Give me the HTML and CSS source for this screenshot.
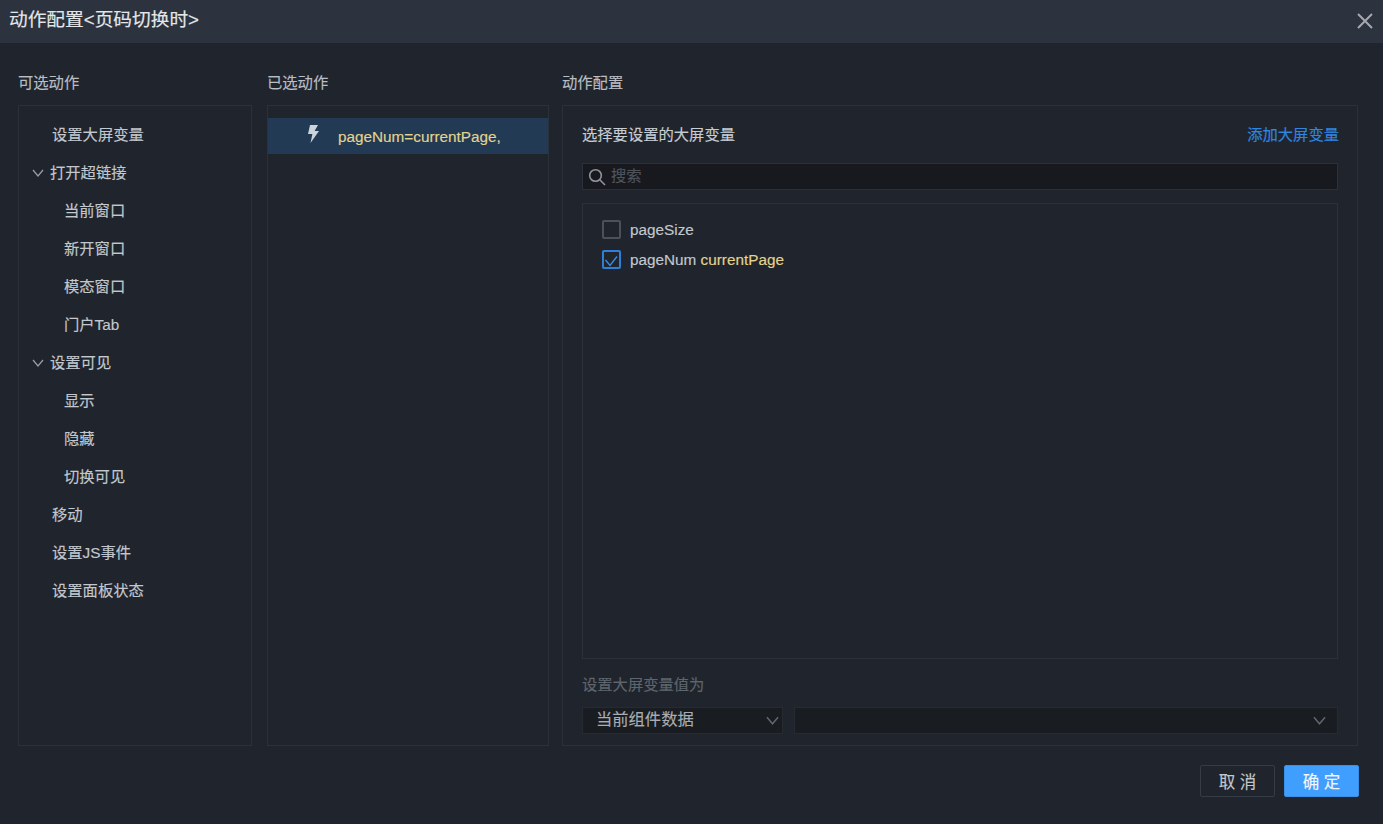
FILE: index.html
```html
<!DOCTYPE html>
<html lang="zh">
<head>
<meta charset="utf-8">
<title>动作配置</title>
<link rel="stylesheet" href="styles.css">
</head>
<body>
<div class="dialog">
  <header class="head">
    <span class="head-title">动作配置&lt;页码切换时&gt;</span>
    <svg class="close" viewBox="0 0 16 16"><path d="M1 1 15 15M15 1 1 15"/></svg>
  </header>
  <main class="cols">
    <section class="col col-a">
      <h2 class="col-title">可选动作</h2>
      <ul class="panel tree">
        <li class="node">设置大屏变量</li>
        <li class="node parent"><svg class="chev" viewBox="0 0 12 8"><path d="M1 1 6 7 11 1"/></svg>打开超链接</li>
        <li class="node sub">当前窗口</li>
        <li class="node sub">新开窗口</li>
        <li class="node sub">模态窗口</li>
        <li class="node sub">门户Tab</li>
        <li class="node parent"><svg class="chev" viewBox="0 0 12 8"><path d="M1 1 6 7 11 1"/></svg>设置可见</li>
        <li class="node sub">显示</li>
        <li class="node sub">隐藏</li>
        <li class="node sub">切换可见</li>
        <li class="node">移动</li>
        <li class="node">设置JS事件</li>
        <li class="node">设置面板状态</li>
      </ul>
    </section>
    <section class="col col-b">
      <h2 class="col-title">已选动作</h2>
      <div class="panel picked">
        <div class="picked-row">
          <svg class="bolt" viewBox="0 0 12 18"><path d="M3 0H11L7.6 6H12L3.5 18 5.4 9H1Z"/></svg>
          <span class="picked-text">pageNum=currentPage,</span>
        </div>
      </div>
    </section>
    <section class="col col-c">
      <h2 class="col-title">动作配置</h2>
      <div class="panel config">
        <div class="config-head">
          <span class="config-title">选择要设置的大屏变量</span>
          <a class="link">添加大屏变量</a>
        </div>
        <div class="search">
          <svg class="search-icon" viewBox="0 0 18 18"><circle cx="7.5" cy="7.5" r="5.8"/><path d="M11.8 11.8 17 17"/></svg>
          <span class="placeholder">搜索</span>
        </div>
        <div class="vars">
          <label class="var"><span class="check"></span><span class="var-text">pageSize</span></label>
          <label class="var"><span class="check on"><svg viewBox="0 0 19 19"><path d="M3.5 10 8 15.5 15 6.5"/></svg></span><span class="var-text">pageNum <em class="val">currentPage</em></span></label>
        </div>
        <div class="set-label">设置大屏变量值为</div>
        <div class="selects">
          <div class="select s1"><span class="sel-text">当前组件数据</span><svg class="sel-chev" viewBox="0 0 14 9"><path d="M1 1 7 8 13 1"/></svg></div>
          <div class="select s2"><svg class="sel-chev" viewBox="0 0 14 9"><path d="M1 1 7 8 13 1"/></svg></div>
        </div>
      </div>
    </section>
  </main>
  <footer class="foot">
    <button class="btn">取 消</button>
    <button class="btn primary">确 定</button>
  </footer>
</div>
</body>
</html>
```
FILE: styles.css
```css
* { box-sizing: border-box; }
html, body { margin: 0; height: 100%; }
body {
  background: #20252d;
  color: #c3c8cf;
  font-family: "Liberation Sans", "Noto Sans CJK SC", sans-serif;
  font-size: 15.3px;
  -webkit-text-stroke: 0.15px;
  overflow: hidden;
}
.dialog { width: 1383px; height: 824px; display: flex; flex-direction: column; }
.head {
  height: 43px;
  flex: none;
  background: #2c333e;
  display: flex;
  align-items: center;
  justify-content: space-between;
  padding: 0 10px 4px 9px;
}
.head-title { color: #e4e7ea; font-size: 18.7px; line-height: 22px; }
.close { width: 16px; height: 16px; fill: none; stroke: #a5a9ae; stroke-width: 2; margin-top: 3px; }
.cols { display: flex; height: 703px; flex: none; padding: 29px 25px 0 18px; }
.col { display: flex; flex-direction: column; }
.col-a { width: 234px; margin-right: 15px; }
.col-b { width: 282px; margin-right: 13px; }
.col-c { width: 796px; }
.col-title { margin: 0 0 11px; height: 22px; font-size: 15.3px; line-height: 22px; font-weight: 400; color: #b9bec5; }
.panel { flex: 1; border: 1px solid #2b313b; margin: 0; list-style: none; }
.tree { padding: 10px 0 0; }
.node { height: 38px; line-height: 38px; padding-left: 33px; color: #c3c8cf; white-space: nowrap; display: flex; align-items: center; }
.node.parent { padding-left: 13px; }
.node.sub { padding-left: 45px; }
.chev { width: 12px; height: 8px; margin-right: 6px; fill: none; stroke: #9aa0a8; stroke-width: 1.2; }
.picked { padding-top: 12px; }
.picked-row { height: 36px; background: #233a54; display: flex; align-items: center; padding-left: 39px; }
.bolt { width: 12px; height: 18px; fill: #cdd3da; margin-top: -5px; }
.picked-text { margin-left: 19px; padding-top: 2px; color: #e2d48e; font-size: 15.3px; }
.config { padding: 0 19px; display: flex; flex-direction: column; }
.config-head { height: 57px; flex: none; display: flex; justify-content: space-between; padding-top: 18px; line-height: 22px; }
.config-title { color: #c8cdd3; }
.link { color: #2f86e0; margin-right: -1px; }
.search {
  height: 27px;
  flex: none;
  background: #17191e;
  border: 1px solid #2b313b;
  display: flex;
  align-items: center;
  padding-left: 5px;
}
.search-icon { width: 18px; height: 18px; fill: none; stroke: #8f959c; stroke-width: 1.6; }
.placeholder { margin-left: 5px; color: #4e545c; font-size: 15.3px; line-height: 18px; margin-top: -2px; }
.vars {
  height: 456px;
  flex: none;
  margin-top: 13px;
  border: 1px solid #2b313b;
  padding: 10px 19px 0;
}
.var { height: 30px; display: flex; align-items: center; gap: 9px; color: #c3c8cf; font-size: 15.3px; }
.var-text { padding-top: 1px; }
.check { width: 19px; height: 19px; border: 2px solid #4a515b; border-radius: 2px; flex: none; }
.check svg { display: block; width: 19px; height: 19px; margin: -2px; fill: none; stroke: #3a8fe6; stroke-width: 1.3; }
.check.on { border-color: #2f7fd6; }
.val { font-style: normal; color: #e2d48e; }
.set-label { margin-top: 15px; height: 22px; line-height: 22px; color: #5f656d; flex: none; }
.selects { margin-top: 11px; height: 27px; flex: none; display: flex; gap: 11px; }
.select {
  background: #191c21;
  border: 1px solid #262b33;
  display: flex;
  align-items: center;
  justify-content: space-between;
  padding: 0 3px 0 13px;
  color: #a8adb3;
}
.sel-text { font-size: 16.3px; line-height: 20px; margin-top: -4px; }
.s1 { width: 201px; }
.s2 { flex: 1; justify-content: flex-end; padding-right: 11px; }
.sel-chev { width: 13px; height: 9px; fill: none; stroke: #62676e; stroke-width: 1.6; }
.foot { display: flex; justify-content: flex-end; gap: 9px; padding: 19px 24px 0 0; }
.btn {
  width: 75px;
  height: 32px;
  font: inherit;
  font-size: 16.5px;
  color: #c3c8cf;
  background: #20252d;
  border: 1.5px solid #363c46;
  border-radius: 2px;
}
.btn.primary { background: #409eff; border-color: #3b8fe6; color: #f2f7fc; }
```
